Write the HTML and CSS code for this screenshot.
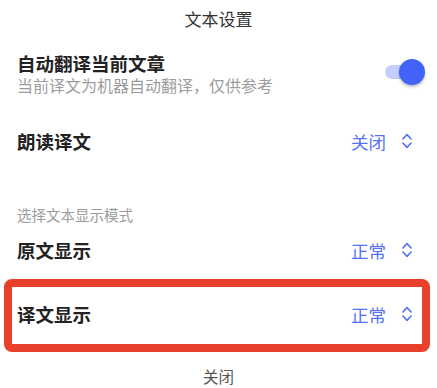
FILE: index.html
```html
<!DOCTYPE html>
<html>
<head>
    <title>文本设置</title>
    <meta charset="utf-8">
    <link rel="stylesheet" href="styles.css">
</head>
<body>
    <div class="sheet">
        <div class="sheet_title">文本设置</div>

        <div class="switch_row">
            <div class="switch_text">
                <div class="row_title">自动翻译当前文章</div>
                <div class="row_sub">当前译文为机器自动翻译，仅供参考</div>
            </div>
            <div class="switch switch_on">
                <div class="switch_track"></div>
                <div class="switch_knob"></div>
            </div>
        </div>

        <div class="row row_read">
            <div class="row_title">朗读译文</div>
            <div class="picker">
                <span>关闭</span>
                <svg class="updown" width="10" height="16" viewBox="0 0 10 16">
                    <path d="M0.9 6 L5 1.6 L9.1 6 M0.9 10 L5 14.4 L9.1 10" />
                </svg>
            </div>
        </div>

        <div class="section_label">选择文本显示模式</div>

        <div class="row">
            <div class="row_title">原文显示</div>
            <div class="picker">
                <span>正常</span>
                <svg class="updown" width="10" height="16" viewBox="0 0 10 16">
                    <path d="M0.9 6 L5 1.6 L9.1 6 M0.9 10 L5 14.4 L9.1 10" />
                </svg>
            </div>
        </div>

        <div class="row row_marked">
            <div class="row_title">译文显示</div>
            <div class="picker">
                <span>正常</span>
                <svg class="updown" width="10" height="16" viewBox="0 0 10 16">
                    <path d="M0.9 6 L5 1.6 L9.1 6 M0.9 10 L5 14.4 L9.1 10" />
                </svg>
            </div>
        </div>

        <div class="sheet_close">关闭</div>
    </div>
</body>
</html>
```

FILE: styles.css
```css
body {
    margin: 0;
    background: #fff;
    font-family: "Noto Sans CJK SC", "Noto Sans", sans-serif;
    color: #222;
}

.sheet {
    display: flex;
    flex-direction: column;
}

.sheet_title {
    height: 38px;
    line-height: 38px;
    text-align: center;
    font-size: 17px;
    color: #333;
}

.switch_row {
    display: flex;
    align-items: center;
    justify-content: space-between;
    padding: 14px 12px 0 17px;
}

.row_title {
    font-size: 18.5px;
    line-height: 22px;
    font-weight: bold;
    color: #222;
}

.row_sub {
    margin-top: 1px;
    font-size: 16px;
    line-height: 21px;
    color: #9c9c9c;
}

.switch {
    position: relative;
    width: 40px;
    height: 28px;
    margin-top: -5px;
}
.switch_track {
    position: absolute;
    left: 0;
    top: 7px;
    width: 36px;
    height: 14px;
    border-radius: 7px;
    background: #c6cefd;
}
.switch_knob {
    position: absolute;
    right: 0;
    top: 1px;
    width: 26px;
    height: 26px;
    border-radius: 50%;
    background: #4262f8;
    box-shadow: 0 2px 3px rgba(0, 0, 0, 0.25);
}

.row {
    display: flex;
    align-items: center;
    justify-content: space-between;
    height: 50px;
    padding: 0 25px 0 17px;
}
.row_read {
    margin-top: 20px;
}
.row_marked {
    position: relative;
    margin-top: 14px;
}
/* annotation box drawn over the row */
.row_marked::after {
    content: "";
    position: absolute;
    left: 4px;
    right: 7px;
    top: -10px;
    bottom: -13px;
    border: 8px solid #e8402b;
    border-radius: 8px;
}

.picker {
    display: flex;
    align-items: center;
    gap: 16px;
    font-size: 17.5px;
    color: #5572f2;
}
.updown {
    display: block;
}
.updown path {
    fill: none;
    stroke: #5572f2;
    stroke-width: 1.6;
    stroke-linecap: round;
    stroke-linejoin: round;
}

.section_label {
    margin-top: 39px;
    padding-left: 17px;
    font-size: 14.5px;
    line-height: 20px;
    color: #9c9c9c;
}

.sheet_close {
    margin-top: 27px;
    line-height: 20px;
    text-align: center;
    font-size: 15.5px;
    color: #555;
}
```
